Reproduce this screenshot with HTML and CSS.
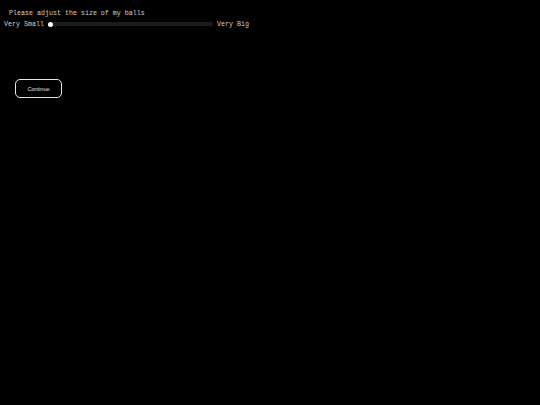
FILE: index.html
```html
<!DOCTYPE html>
<html>
<head>
<meta charset="utf-8">
<link rel="stylesheet" href="styles.css">
</head>
<body>
<div class="page">
  <p class="title">Please adjust the size of my balls</p>
  <div class="slider-row">
    <span class="label">Very Small</span>
    <div class="track"><div class="thumb"></div></div>
    <span class="label">Very Big</span>
  </div>
  <button class="continue">Continue</button>
</div>
</body>
</html>
```
FILE: styles.css
```css
html, body {
  margin: 0;
  background: #000;
  color: #d0d0d0;
}
.page {
  display: flex;
  flex-direction: column;
  align-items: flex-start;
  font-family: "Liberation Mono", "Courier New", monospace;
  font-size: 6.67px;
}
.title {
  margin: 9px 0 0 9px;
  line-height: 8px;
}
.slider-row {
  display: flex;
  align-items: center;
  margin: 3px 0 0 4px;
  height: 8px;
}
.track {
  width: 165px;
  height: 4px;
  margin: 0 4px 0 4px;
  background: #1c1c1c;
  border-radius: 2px;
  display: flex;
  align-items: center;
}
.thumb {
  width: 5px;
  height: 5px;
  border-radius: 50%;
  background: #fff;
}
.continue {
  margin: 51px 0 0 15px;
  width: 47px;
  height: 19px;
  background: #000;
  color: #e0e0e0;
  border: 1.5px solid #e8e8e8;
  border-radius: 5px;
  font-family: "Liberation Sans", Arial, sans-serif;
  font-size: 5.5px;
  padding: 0;
}
```
